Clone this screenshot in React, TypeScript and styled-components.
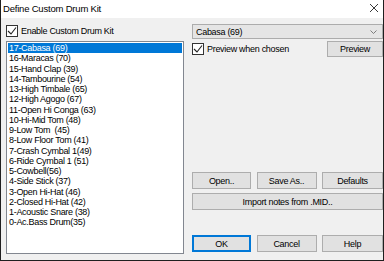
import React from 'react';
import styled, { createGlobalStyle } from 'styled-components';

const GlobalStyle = createGlobalStyle`
    html, body {
        margin: 0;
        padding: 0;
        background: #fff;
    }
    * {
        box-sizing: border-box;
    }
`;

const Window = styled.div`
    width: 384px;
    height: 261px;
    display: flex;
    flex-direction: column;
    background: #f0f0f0;
    border: 1px solid #1f1f1f;
    border-top: none;
    font-family: 'Liberation Sans', Arial, sans-serif;
    font-size: 9px;
    letter-spacing: -0.3px;
    color: #000;
`;

const TitleBar = styled.div`
    height: 18px;
    flex: none;
    display: flex;
    align-items: center;
    justify-content: space-between;
    background: #fff;
    padding: 0 4px 2px 2px;
    font-size: 9.5px;
    letter-spacing: -0.2px;
`;

const Body = styled.div`
    flex: 1;
    display: flex;
    gap: 8px;
    padding: 6px 0 6px 5px;
    min-height: 0;
`;

const LeftCol = styled.div`
    width: 178px;
    display: flex;
    flex-direction: column;
    gap: 3px;
`;

const RightCol = styled.div`
    flex: 1;
    display: flex;
    flex-direction: column;
    padding-bottom: 2px;
`;

const CheckRow = styled.label`
    height: 14px;
    display: flex;
    align-items: center;
    gap: 3px;
    white-space: nowrap;
`;

const Box = styled.span`
    width: 12px;
    height: 12px;
    flex: none;
    background: #fff;
    border: 1px solid #333;
    display: flex;
    align-items: center;
    justify-content: center;
`;

const ListBox = styled.div`
    flex: 1;
    background: #fff;
    border: 1px solid #828790;
    padding: 1px;
    overflow: hidden;
`;

const Item = styled.div<{ selected?: boolean }>`
    height: 10.25px;
    line-height: 10.25px;
    padding-left: 1px;
    white-space: pre;
    background: ${(props) => (props.selected ? '#0078d7' : 'transparent')};
    color: ${(props) => (props.selected ? '#fff' : '#000')};
`;

const Combo = styled.div`
    height: 15px;
    display: flex;
    align-items: center;
    justify-content: space-between;
    padding: 0 5px 0 3px;
    background: #e5e5e5;
    border: 1px solid #acacac;
`;

const PreviewRow = styled.div`
    margin-top: 2px;
    display: flex;
    align-items: center;
    justify-content: space-between;
`;

const Button = styled.button<{ primary?: boolean }>`
    height: 17px;
    padding: 0;
    margin: 0;
    font: inherit;
    letter-spacing: inherit;
    color: #000;
    background: #e1e1e1;
    border: 1px solid ${(props) => (props.primary ? '#0078d7' : '#adadad')};
    box-shadow: ${(props) => (props.primary ? 'inset 0 0 0 1px #0078d7' : 'none')};
`;

const PreviewButton = styled(Button)`
    width: 56px;
    height: 16px;
`;

const ButtonGrid = styled.div<{ top: number }>`
    display: grid;
    grid-template-columns: 59px 60px 61px;
    justify-content: space-between;
    margin-top: ${(props) => props.top}px;
`;

const WideButton = styled(Button)`
    margin-top: 4px;
    width: 100%;
`;

const Spacer = styled.div`
    flex: 1;
`;

const items = [
    '17-Cabasa (69)',
    '16-Maracas (70)',
    '15-Hand Clap (39)',
    '14-Tambourine (54)',
    '13-High Timbale (65)',
    '12-High Agogo (67)',
    '11-Open Hi Conga (63)',
    '10-Hi-Mid Tom (48)',
    '9-Low Tom  (45)',
    '8-Low Floor Tom (41)',
    '7-Crash Cymbal 1(49)',
    '6-Ride Cymbal 1 (51)',
    '5-Cowbell(56)',
    '4-Side Stick (37)',
    '3-Open Hi-Hat (46)',
    '2-Closed Hi-Hat (42)',
    '1-Acoustic Snare (38)',
    '0-Ac.Bass Drum(35)',
];

const Check = () => (
    <Box>
        <svg width="10" height="10" viewBox="0 0 10 10">
            <path d="M1 5 L4 8 L9 1.5" fill="none" stroke="#222" strokeWidth="1.1" />
        </svg>
    </Box>
);

const App: React.FC = () => {
    const [selected, setSelected] = React.useState(0);

    return (
        <>
            <GlobalStyle />
            <Window>
                <TitleBar>
                    <span>Define Custom Drum Kit</span>
                    <svg width="10" height="10" viewBox="0 0 10 10">
                        <path d="M1 1 L9 9 M9 1 L1 9" stroke="#222" strokeWidth="0.9" />
                    </svg>
                </TitleBar>
                <Body>
                    <LeftCol>
                        <CheckRow>
                            <Check />
                            Enable Custom Drum Kit
                        </CheckRow>
                        <ListBox>
                            {items.map((item, i) => (
                                <Item key={item} selected={i === selected} onClick={() => setSelected(i)}>
                                    {item}
                                </Item>
                            ))}
                        </ListBox>
                    </LeftCol>
                    <RightCol>
                        <Combo>
                            <span>{items[selected].replace(/^\d+-/, '')}</span>
                            <svg width="7" height="4" viewBox="0 0 7 4">
                                <path d="M0.5 0.5 L3.5 3.5 L6.5 0.5" fill="none" stroke="#707070" strokeWidth="0.9" />
                            </svg>
                        </Combo>
                        <PreviewRow>
                            <CheckRow>
                                <Check />
                                Preview when chosen
                            </CheckRow>
                            <PreviewButton>Preview</PreviewButton>
                        </PreviewRow>
                        <Spacer />
                        <ButtonGrid top={0}>
                            <Button>Open..</Button>
                            <Button>Save As..</Button>
                            <Button>Defaults</Button>
                        </ButtonGrid>
                        <WideButton>Import notes from .MID..</WideButton>
                        <ButtonGrid top={25}>
                            <Button primary>OK</Button>
                            <Button>Cancel</Button>
                            <Button>Help</Button>
                        </ButtonGrid>
                    </RightCol>
                </Body>
            </Window>
        </>
    );
};

export default App;
